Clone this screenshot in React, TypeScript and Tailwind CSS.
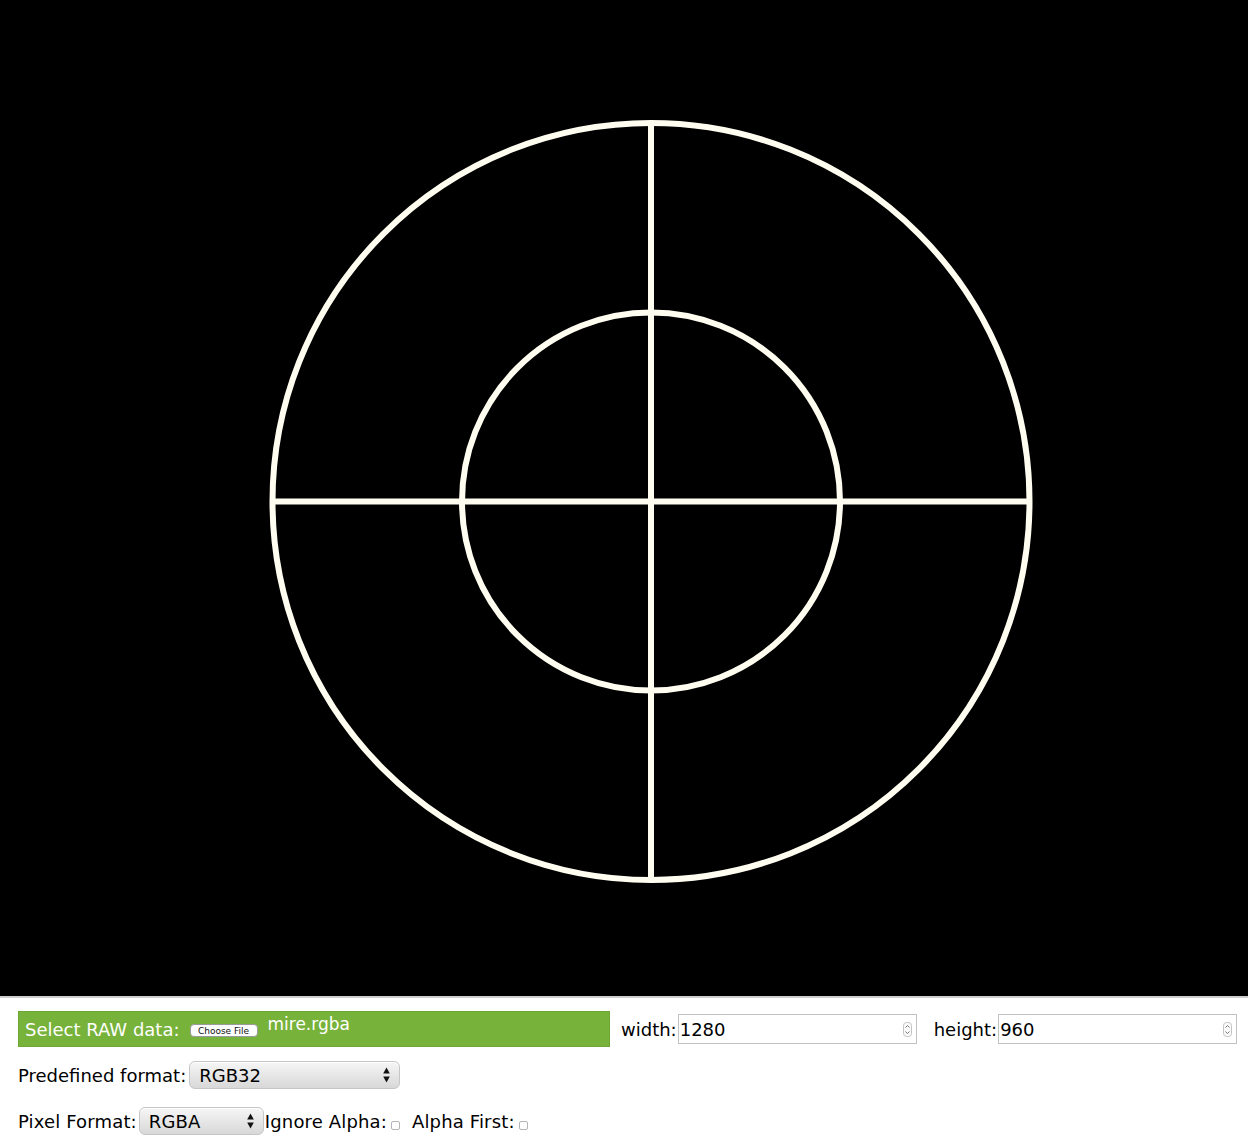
import React from "react";

const CX = 651;
const CY = 501.5;
const R_OUT = 378.5;
const R_IN = 189;
const INK = "#fffdf0";

function Mire() {
  return (
    <svg width={1248} height={996} viewBox="0 0 1248 996" className="block">
      <rect width={1248} height={996} fill="#000" />
      <g stroke={INK} strokeWidth={6} fill="none">
        <circle cx={CX} cy={CY} r={R_OUT} />
        <circle cx={CX} cy={CY} r={R_IN} />
        <line x1={CX} y1={CY - R_OUT} x2={CX} y2={CY + R_OUT} />
        <line x1={CX - R_OUT} y1={CY} x2={CX + R_OUT} y2={CY} />
      </g>
    </svg>
  );
}

function Spinner() {
  return (
    <svg width={9} height={15} viewBox="0 0 9 15" className="shrink-0">
      <rect x={0.5} y={0.5} width={8} height={14} rx={3} fill="#fafafa" stroke="#c4c4c4" />
      <path d="M2.5 5.5 L4.5 3.5 L6.5 5.5" stroke="#777" strokeWidth={1} fill="none" />
      <path d="M2.5 9.5 L4.5 11.5 L6.5 9.5" stroke="#777" strokeWidth={1} fill="none" />
    </svg>
  );
}

function SelectArrows() {
  return (
    <svg width={7} height={16} viewBox="0 0 7 16" className="shrink-0">
      <path d="M3.5 0.5 L6.8 6.5 L0.2 6.5 Z" fill="#111" />
      <path d="M3.5 15.5 L6.8 9.5 L0.2 9.5 Z" fill="#111" />
    </svg>
  );
}

function NumberInput({ value }: { value: string }) {
  return (
    <div className="flex h-[30px] w-[239px] shrink-0 items-center justify-between border border-[#c2c2c2] bg-white pl-[1px] pr-[4px]">
      <span className="text-[18px] text-black">{value}</span>
      <Spinner />
    </div>
  );
}

function FakeSelect({ value, width }: { value: string; width: string }) {
  return (
    <div
      className={`flex h-[28px] ${width} shrink-0 items-center justify-between rounded-[6px] border border-[#c6c6c6] bg-gradient-to-b from-[#f6f6f6] to-[#d8d8d8] pl-[9px] pr-[9px] shadow-[inset_0_1px_0_#ffffff]`}
    >
      <span className="text-[18px] text-black">{value}</span>
      <SelectArrows />
    </div>
  );
}

function Checkbox() {
  return (
    <span className="mt-[8px] ml-[4px] mr-[3px] inline-block h-[9px] w-[9px] shrink-0 rounded-[2px] border border-[#b4b4b4] bg-white" />
  );
}

export default function App() {
  return (
    <div className="h-[1148px] w-[1248px] overflow-hidden whitespace-nowrap bg-white font-['DejaVu_Sans',Verdana,sans-serif] text-[18px] text-black">
      <div className="border-b-2 border-[#cfcfcf]">
        <Mire />
      </div>

      <div className="pl-[18px] pt-[13px]">
        {/* file row */}
        <div className="flex items-center">
          <div className="flex h-[36px] w-[592px] shrink-0 items-center border border-[#6da833] bg-[#77b23a] pl-[6px]">
            <span className="text-white">Select RAW data:</span>
            <span className="ml-[10px] mt-[2px] flex h-[13px] w-[68px] items-end justify-center rounded-[4px] border border-[#9a9a9a] bg-white text-[9px] leading-[10px] text-[#111]">
              Choose File
            </span>
            <span className="mb-[8px] ml-[10px] text-[17px] text-white">mire.rgba</span>
          </div>
          <span className="ml-[11px] mr-[1px] shrink-0">width:</span>
          <NumberInput value="1280" />
          <span className="ml-[17px] mr-[1px] shrink-0">height:</span>
          <NumberInput value="960" />
        </div>

        {/* predefined format */}
        <div className="mt-[14px] flex items-center">
          <span className="mr-[3px]">Predefined format:</span>
          <FakeSelect value="RGB32" width="w-[211px]" />
        </div>

        {/* pixel format */}
        <div className="mt-[18px] flex items-center tracking-[0.15px]">
          <span className="mr-[2px]">Pixel Format:</span>
          <FakeSelect value="RGBA" width="w-[125px]" />
          <span className="ml-[1px]">Ignore Alpha:</span>
          <Checkbox />
          <span className="ml-[9px]">Alpha First:</span>
          <Checkbox />
        </div>
      </div>
    </div>
  );
}
